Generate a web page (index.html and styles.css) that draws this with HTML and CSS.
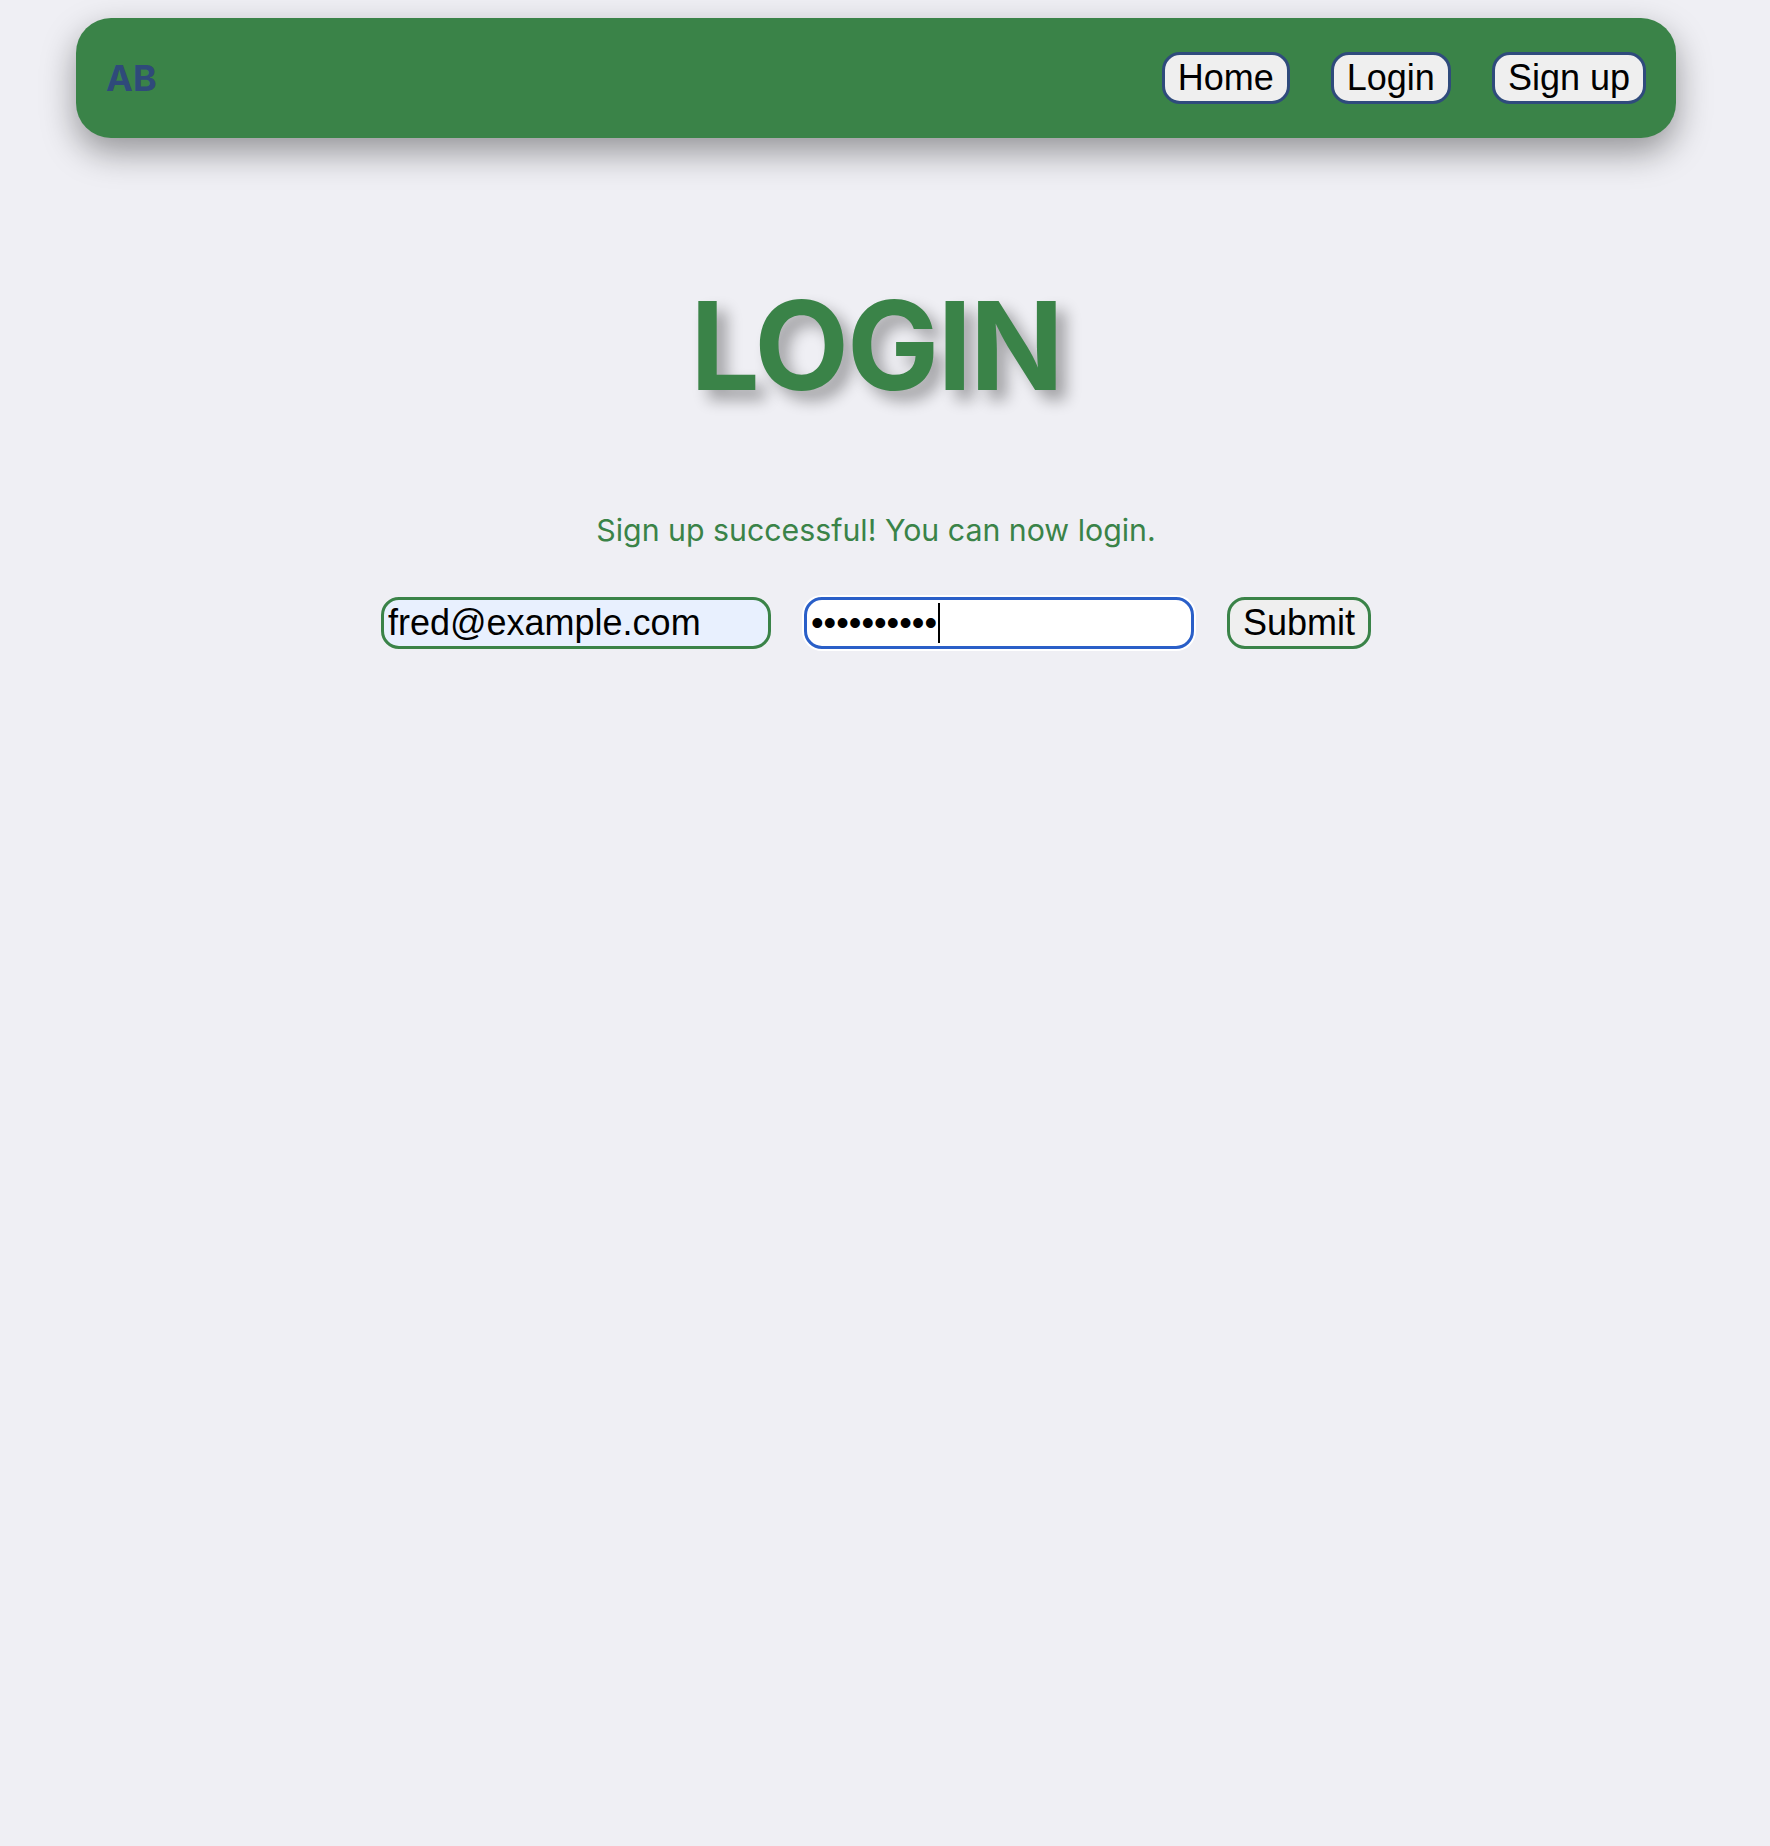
FILE: index.html
```html
<!DOCTYPE html>
<html lang="en">
<head>
<meta charset="utf-8">
<title>Login</title>
<link rel="stylesheet" href="styles.css">
</head>
<body>
<div class="page">
  <nav class="navbar">
    <div class="brand">AB</div>
    <div class="nav-links">
      <button class="nav-btn" type="button">Home</button>
      <button class="nav-btn" type="button">Login</button>
      <button class="nav-btn" type="button">Sign up</button>
    </div>
  </nav>
  <main class="main">
    <h1 class="title">LOGIN</h1>
    <p class="message">Sign up successful! You can now login.</p>
    <form class="login-form">
      <input class="field field-email" type="email" value="fred@example.com">
      <span class="pw-wrap">
        <input class="field field-password" type="password" value="1234567890">
        <span class="caret"></span>
      </span>
      <button class="submit-btn" type="button">Submit</button>
    </form>
  </main>
</div>
</body>
</html>
```
FILE: styles.css
```css
html, body {
  margin: 0;
  padding: 0;
  background: #efeff4;
}

.page {
  padding-right: 18px;
  min-height: 1846px;
  box-sizing: border-box;
}

.navbar {
  margin: 18px 76px 0 76px;
  height: 120px;
  box-sizing: border-box;
  background: #3a8348;
  border-radius: 35px;
  box-shadow: 0 14px 34px rgba(0, 0, 0, 0.38);
  display: flex;
  align-items: center;
  justify-content: space-between;
  padding: 0 30px 0 30px;
}

.brand {
  font-family: Inter, "Noto Sans", sans-serif;
  font-weight: 700;
  font-size: 36px;
  line-height: 40px;
  color: #2f4a7a;
}

.nav-links {
  display: flex;
  gap: 41px;
  align-items: center;
}

.nav-btn,
.submit-btn {
  font-family: "Liberation Sans", Arial, sans-serif;
  font-size: 36px;
  line-height: 40px;
  padding: 3px 13px;
  border: 3px solid #2f4b7c;
  border-radius: 18px;
  background: #efefef;
  color: #000;
  margin: 0;
}

.submit-btn {
  border-color: #3a8348;
}

.main {
  display: flex;
  flex-direction: column;
  align-items: center;
}

.title {
  margin: 147px 0 0 0;
  font-family: Inter, "Noto Sans", sans-serif;
  font-weight: 700;
  font-size: 123px;
  line-height: 122px;
  letter-spacing: -2px;
  color: #3a8348;
  text-shadow: 10px 10px 15px rgba(0, 0, 0, 0.33);
}

.message {
  margin: 103px 0 0 0;
  font-family: Inter, "Noto Sans", sans-serif;
  font-size: 30.3px;
  line-height: 40px;
  color: #3a8348;
}

.login-form {
  margin-top: 47px;
  display: flex;
  align-items: center;
  gap: 33px;
}

.field {
  font-family: "Liberation Sans", Arial, sans-serif;
  font-size: 36px;
  line-height: 40px;
  height: 52px;
  width: 390px;
  box-sizing: border-box;
  padding: 3px 4px;
  border: 3px solid #3a8348;
  border-radius: 18px;
  margin: 0;
  color: #000;
  outline: none;
}

.field-email {
  background: #e8f0fe;
}

.pw-wrap {
  position: relative;
  display: block;
}

.field-password {
  background: #fff;
  border-color: #2a5fc8;
  box-shadow: 0 0 0 2px #fff;
}

.caret {
  position: absolute;
  left: 134px;
  top: 6px;
  width: 2px;
  height: 40px;
  background: #000;
}
```
